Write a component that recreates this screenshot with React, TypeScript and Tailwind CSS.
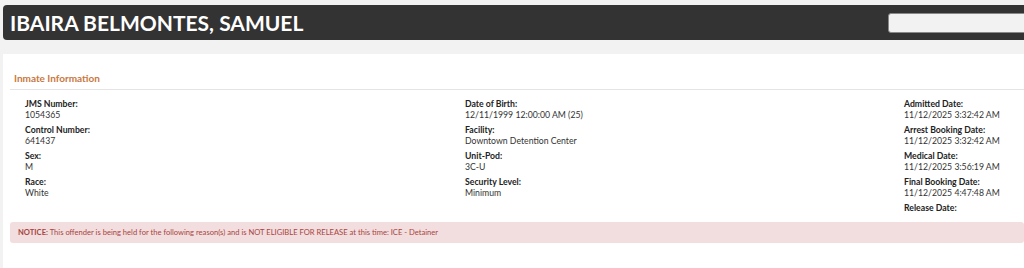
const fields: { label: string; value?: string }[][] = [
  [
    { label: "JMS Number:", value: "1054365" },
    { label: "Control Number:", value: "641437" },
    { label: "Sex:", value: "M" },
    { label: "Race:", value: "White" },
  ],
  [
    { label: "Date of Birth:", value: "12/11/1999 12:00:00 AM (25)" },
    { label: "Facility:", value: "Downtown Detention Center" },
    { label: "Unit-Pod:", value: "3C-U" },
    { label: "Security Level:", value: "Minimum" },
  ],
  [
    { label: "Admitted Date:", value: "11/12/2025 3:32:42 AM" },
    { label: "Arrest Booking Date:", value: "11/12/2025 3:32:42 AM" },
    { label: "Medical Date:", value: "11/12/2025 3:56:19 AM" },
    { label: "Final Booking Date:", value: "11/12/2025 4:47:48 AM" },
    { label: "Release Date:" },
  ],
];

export default function App() {
  return (
    <div className="min-h-[268px] w-[1024px] overflow-hidden bg-[#f2f2f2] font-['Lato',sans-serif] text-[#333]">
      {/* header */}
      <div className="pl-[3px] pt-[5px]">
        <div className="flex h-[35px] w-[1040px] items-center justify-between rounded-l-[4px] bg-[#333333] pl-[7px]">
          <h1 className="text-[21px] font-bold leading-none text-white">IBAIRA BELMONTES, SAMUEL</h1>
          <input
            className="h-[20px] w-[155px] rounded-[3px] border border-[#888] bg-[#f2f2f2] outline-none"
            aria-label="search"
          />
        </div>
      </div>

      {/* panel */}
      <div className="ml-[3px] mt-[14px] min-h-[214px] bg-white pb-4 pl-[7px]">
        <div className="pt-[17px]">
          <h2 className="pl-[4px] text-[10px] font-bold leading-[14px] text-[#c8783f]">Inmate Information</h2>
          <div className="mt-[4px] h-px bg-[#e4e4e4]" />
        </div>

        <div className="grid grid-cols-[440px_439px_1fr] pl-[15px] pt-[8px]">
          {fields.map((col, i) => (
            <div key={i} className="flex flex-col gap-[4px]">
              {col.map((f) => (
                <div key={f.label} className="text-[8.7px] leading-[11px]">
                  <div className="font-bold text-[#222]">{f.label}</div>
                  {f.value ? <div className="text-[#333]">{f.value}</div> : null}
                </div>
              ))}
            </div>
          ))}
        </div>

        <div className="mt-[9px] flex h-[21px] items-center rounded-[3px] bg-[#f2dede] pl-[8px] text-[7.6px] text-[#a94442]">
          <span>
            <b>NOTICE:</b> This offender is being held for the following reason(s) and is NOT ELIGIBLE FOR RELEASE at this
            time: ICE - Detainer
          </span>
        </div>
      </div>
    </div>
  );
}
